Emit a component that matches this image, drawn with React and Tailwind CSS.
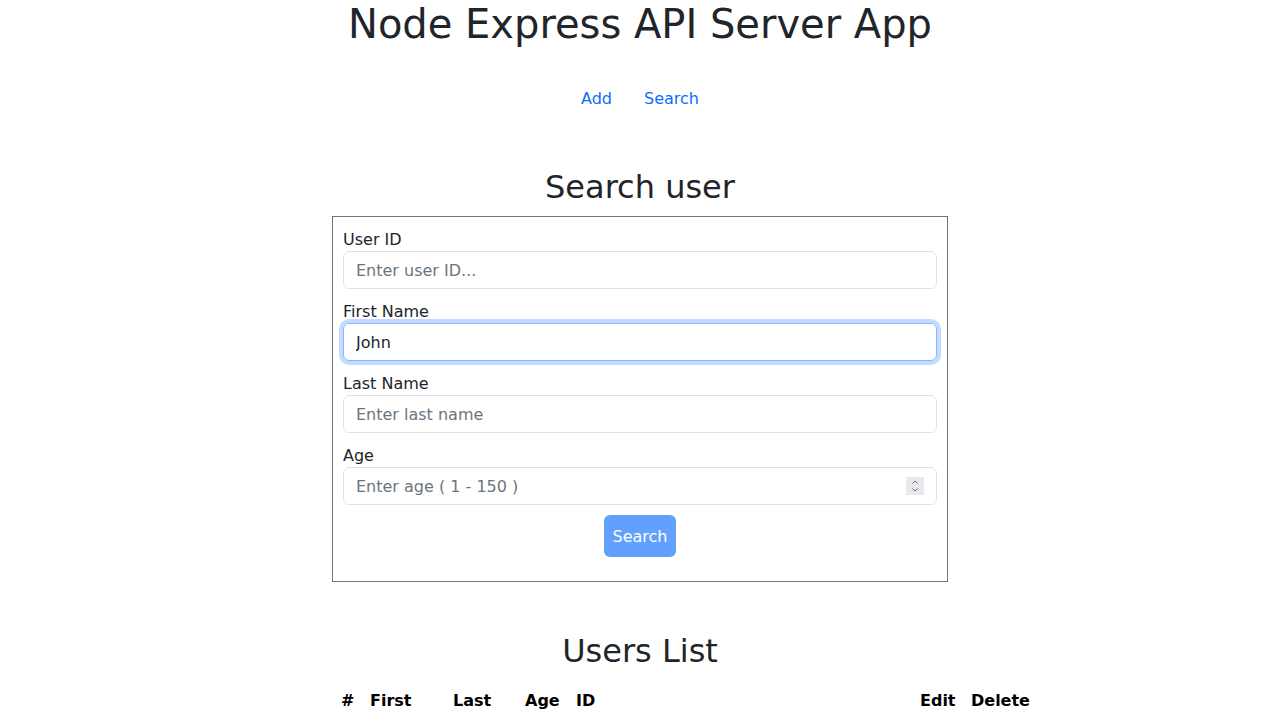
import React, { useState } from 'react';

const font = { fontFamily: '"DejaVu Sans", "Liberation Sans", sans-serif' };

function Field({ label, placeholder, value, focused, number }) {
  return (
    <div className="flex flex-col">
      <label className="text-base leading-6 pt-[1px] -mb-[1px] text-[#212529]">{label}</label>
      <div className="relative">
        <input
          type="text"
          defaultValue={value}
          placeholder={placeholder}
          className={`w-full h-[38px] px-3 rounded-[6px] border text-base text-[#212529] placeholder:text-[#6c757d] outline-none ${
            focused
              ? 'border-[#86b7fe] shadow-[0_0_0_4px_rgba(13,110,253,0.25)]'
              : 'border-[#dee2e6]'
          }`}
        />
        {number && (
          <div className="absolute right-[13px] top-[10px] w-[18px] h-[18px] bg-[#e9e9ed] flex flex-col items-center justify-center">
            <svg width="10" height="16" viewBox="0 0 10 16" fill="none" stroke="#6b6b6b" strokeWidth="1">
              <path d="M2.5 5.5L5 3l2.5 2.5" />
              <path d="M2.5 10.5L5 13l2.5-2.5" />
            </svg>
          </div>
        )}
      </div>
    </div>
  );
}

export default function App() {
  const [tab] = useState('search');

  return (
    <div className="bg-white min-h-screen text-[#212529]" style={font}>
      <h1 className="text-[40px] leading-[48px] text-center">Node Express API Server App</h1>

      <nav className="flex justify-center mt-[31px]">
        <a href="#" className="px-4 py-2 leading-6 text-[#0d6efd]">Add</a>
        <a href="#" className="px-4 py-2 leading-6 text-[#0d6efd]">Search</a>
      </nav>

      <h2 className="text-[32px] leading-[38px] text-center mt-[49px] mb-[10px]">Search user</h2>

      <form className="w-[616px] mx-auto border border-[#6c757d] pt-[10px] px-[10px] pb-6">
        <div className="flex flex-col gap-[10px]">
          <Field label="User ID" placeholder="Enter user ID..." />
          <Field label="First Name" value="John" focused />
          <Field label="Last Name" placeholder="Enter last name" />
          <Field label="Age" placeholder="Enter age ( 1 - 150 )" number />
        </div>
        <div className="flex justify-center mt-[10px]">
          <button
            type="button"
            disabled={tab === 'search'}
            className="h-[42px] px-[9px] pt-[1px] rounded-[6px] bg-[#0d6efd] opacity-65 text-white text-base"
          >
            Search
          </button>
        </div>
      </form>

      <h2 className="text-[32px] leading-[38px] text-center mt-[50px]">Users List</h2>

      <div className="w-[616px] mx-auto mt-[11px]">
        <table className="w-[706px] ml-[1px] table-fixed text-left border-collapse">
          <thead>
            <tr className="font-bold text-black">
              <th className="w-[29px] pl-[8px] py-2 leading-6">#</th>
              <th className="w-[83px] px-2 py-2 leading-6">First</th>
              <th className="w-[72px] px-2 py-2 leading-6">Last</th>
              <th className="w-[51px] px-2 py-2 leading-6">Age</th>
              <th className="w-[344px] px-2 py-2 leading-6">ID</th>
              <th className="w-[51px] px-2 py-2 leading-6">Edit</th>
              <th className="w-[76px] px-2 py-2 leading-6">Delete</th>
            </tr>
          </thead>
        </table>
      </div>
    </div>
  );
}
